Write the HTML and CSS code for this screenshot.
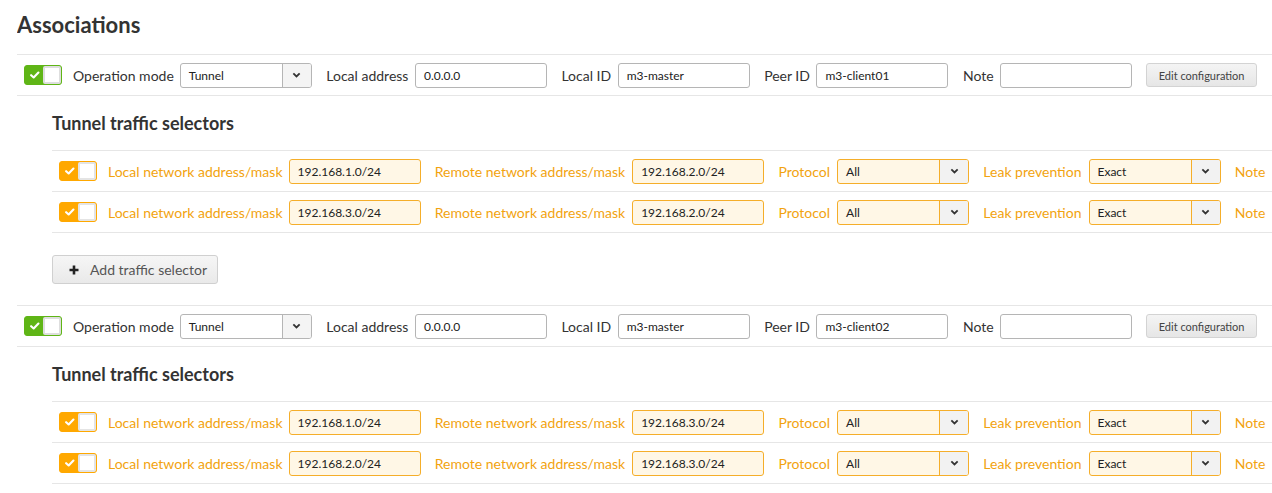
FILE: index.html
```html
<!DOCTYPE html>
<html>
<head>
<meta charset="utf-8">
<link rel="stylesheet" href="styles.css">
</head>
<body>
<h1 class="title">Associations</h1>

<section class="assoc">
  <div class="assoc-row">
    <span class="toggle toggle-green"><svg class="check" viewBox="0 0 10 8"><polyline points="1.2,4.2 3.8,6.6 8.8,1.4"/></svg><span class="knob"></span></span>
    <label class="lbl first">Operation mode</label>
    <span class="select"><span class="sel-text">Tunnel</span><span class="sel-arrow"><svg viewBox="0 0 10 6"><polyline points="1.5,1.2 5,4.6 8.5,1.2"/></svg></span></span>
    <label class="lbl">Local address</label><span class="input">0.0.0.0</span>
    <label class="lbl">Local ID</label><span class="input">m3-master</span>
    <label class="lbl">Peer ID</label><span class="input">m3-client01</span>
    <label class="lbl">Note</label><span class="input"></span>
    <button class="btn-edit">Edit configuration</button>
  </div>
  <div class="selectors">
    <h2 class="sub">Tunnel traffic selectors</h2>
    <div class="sel-list">
      <div class="sel-row">
        <span class="toggle toggle-orange"><svg class="check" viewBox="0 0 10 8"><polyline points="1.2,4.2 3.8,6.6 8.8,1.4"/></svg><span class="knob"></span></span>
        <label class="olbl first">Local network address/mask</label><span class="input oin">192.168.1.0/24</span>
        <label class="olbl">Remote network address/mask</label><span class="input oin">192.168.2.0/24</span>
        <label class="olbl">Protocol</label><span class="select osel"><span class="sel-text">All</span><span class="sel-arrow"><svg viewBox="0 0 10 6"><polyline points="1.5,1.2 5,4.6 8.5,1.2"/></svg></span></span>
        <label class="olbl">Leak prevention</label><span class="select osel"><span class="sel-text">Exact</span><span class="sel-arrow"><svg viewBox="0 0 10 6"><polyline points="1.5,1.2 5,4.6 8.5,1.2"/></svg></span></span>
        <label class="olbl">Note</label><span class="input oin"></span>
      </div>
      <div class="sel-row">
        <span class="toggle toggle-orange"><svg class="check" viewBox="0 0 10 8"><polyline points="1.2,4.2 3.8,6.6 8.8,1.4"/></svg><span class="knob"></span></span>
        <label class="olbl first">Local network address/mask</label><span class="input oin">192.168.3.0/24</span>
        <label class="olbl">Remote network address/mask</label><span class="input oin">192.168.2.0/24</span>
        <label class="olbl">Protocol</label><span class="select osel"><span class="sel-text">All</span><span class="sel-arrow"><svg viewBox="0 0 10 6"><polyline points="1.5,1.2 5,4.6 8.5,1.2"/></svg></span></span>
        <label class="olbl">Leak prevention</label><span class="select osel"><span class="sel-text">Exact</span><span class="sel-arrow"><svg viewBox="0 0 10 6"><polyline points="1.5,1.2 5,4.6 8.5,1.2"/></svg></span></span>
        <label class="olbl">Note</label><span class="input oin"></span>
      </div>
    </div>
    <button class="btn-add"><svg class="plus" viewBox="0 0 10 10"><path d="M5 0.5V9.5M0.5 5H9.5"/></svg>Add traffic selector</button>
  </div>
</section>

<section class="assoc">
  <div class="assoc-row">
    <span class="toggle toggle-green"><svg class="check" viewBox="0 0 10 8"><polyline points="1.2,4.2 3.8,6.6 8.8,1.4"/></svg><span class="knob"></span></span>
    <label class="lbl first">Operation mode</label>
    <span class="select"><span class="sel-text">Tunnel</span><span class="sel-arrow"><svg viewBox="0 0 10 6"><polyline points="1.5,1.2 5,4.6 8.5,1.2"/></svg></span></span>
    <label class="lbl">Local address</label><span class="input">0.0.0.0</span>
    <label class="lbl">Local ID</label><span class="input">m3-master</span>
    <label class="lbl">Peer ID</label><span class="input">m3-client02</span>
    <label class="lbl">Note</label><span class="input"></span>
    <button class="btn-edit">Edit configuration</button>
  </div>
  <div class="selectors">
    <h2 class="sub">Tunnel traffic selectors</h2>
    <div class="sel-list">
      <div class="sel-row">
        <span class="toggle toggle-orange"><svg class="check" viewBox="0 0 10 8"><polyline points="1.2,4.2 3.8,6.6 8.8,1.4"/></svg><span class="knob"></span></span>
        <label class="olbl first">Local network address/mask</label><span class="input oin">192.168.1.0/24</span>
        <label class="olbl">Remote network address/mask</label><span class="input oin">192.168.3.0/24</span>
        <label class="olbl">Protocol</label><span class="select osel"><span class="sel-text">All</span><span class="sel-arrow"><svg viewBox="0 0 10 6"><polyline points="1.5,1.2 5,4.6 8.5,1.2"/></svg></span></span>
        <label class="olbl">Leak prevention</label><span class="select osel"><span class="sel-text">Exact</span><span class="sel-arrow"><svg viewBox="0 0 10 6"><polyline points="1.5,1.2 5,4.6 8.5,1.2"/></svg></span></span>
        <label class="olbl">Note</label><span class="input oin"></span>
      </div>
      <div class="sel-row">
        <span class="toggle toggle-orange"><svg class="check" viewBox="0 0 10 8"><polyline points="1.2,4.2 3.8,6.6 8.8,1.4"/></svg><span class="knob"></span></span>
        <label class="olbl first">Local network address/mask</label><span class="input oin">192.168.2.0/24</span>
        <label class="olbl">Remote network address/mask</label><span class="input oin">192.168.3.0/24</span>
        <label class="olbl">Protocol</label><span class="select osel"><span class="sel-text">All</span><span class="sel-arrow"><svg viewBox="0 0 10 6"><polyline points="1.5,1.2 5,4.6 8.5,1.2"/></svg></span></span>
        <label class="olbl">Leak prevention</label><span class="select osel"><span class="sel-text">Exact</span><span class="sel-arrow"><svg viewBox="0 0 10 6"><polyline points="1.5,1.2 5,4.6 8.5,1.2"/></svg></span></span>
        <label class="olbl">Note</label><span class="input oin"></span>
      </div>
    </div>
  </div>
</section>
</body>
</html>
```

FILE: styles.css
```css
html { overflow: hidden; }
body {
  margin: 0 0 0 17px;
  font-family: Lato, "Open Sans", sans-serif;
  color: #333;
  background: #fff;
}
.title {
  margin: 10px 0 14px;
  font-size: 22px;
  line-height: 30px;
  font-weight: 700;
  color: #333;
}
.assoc-row {
  display: flex;
  align-items: center;
  height: 40px;
  padding-left: 7px;
  border-top: 1px solid #e6e6e6;
  border-bottom: 1px solid #e6e6e6;
  white-space: nowrap;
}
.selectors { margin-left: 35px; }
.sub {
  margin: 0;
  padding: 16px 0 16px;
  font-size: 18px;
  line-height: 22px;
  font-weight: 700;
  color: #333;
}
.sel-list { border-top: 1px solid #e6e6e6; }
.sel-row {
  display: flex;
  align-items: center;
  height: 40px;
  padding-left: 7px;
  border-bottom: 1px solid #e6e6e6;
  white-space: nowrap;
}
.toggle {
  display: flex;
  align-items: center;
  flex: none;
  width: 38px;
  height: 20px;
  box-sizing: border-box;
  border-radius: 3px;
  border: 1px solid;
}
.toggle-green { background: #5fb516; border-color: #5fb516; }
.toggle-orange { background: #ffa800; border-color: #ffa800; }
.check {
  width: 10px;
  height: 8px;
  margin-left: 5px;
  margin-right: 3px;
  fill: none;
  stroke: #fff;
  stroke-width: 2.2;
  stroke-linecap: round;
  stroke-linejoin: round;
}
.knob {
  width: 19px;
  height: 18px;
  box-sizing: border-box;
  margin-left: auto;
  background: #fff;
  border: 2px solid #e4e4e4;
  border-radius: 2px;
}
.toggle-green .knob { border-color: #dedede; }
.lbl, .olbl {
  font-size: 14px;
  margin-left: 14.5px;
  margin-right: 6.5px;
  flex: none;
}
.lbl.first { margin-left: 11px; margin-right: 6px; }
.olbl { color: #f2a30f; margin-left: 14.3px; margin-right: 7px; }
.olbl.first { margin-left: 11px; margin-right: 6px; }
.input, .select {
  flex: none;
  display: flex;
  align-items: center;
  width: 132px;
  height: 25px;
  box-sizing: border-box;
  border: 1px solid #b5b5b5;
  border-radius: 3px;
  background: #fff;
  font-size: 12px;
  color: #222;
  padding-left: 8px;
}
.select { padding-left: 0; }
.sel-text { flex: 1; padding-left: 8px; }
.sel-arrow {
  width: 28px;
  height: 100%;
  display: flex;
  align-items: center;
  justify-content: center;
  border-left: 1px solid #b5b5b5;
  background: #f4f4f4;
  border-radius: 0 2px 2px 0;
}
.sel-arrow svg {
  width: 9px;
  height: 6px;
  fill: none;
  stroke: #333;
  stroke-width: 2;
}
.oin, .osel {
  border-color: #f5ae2a;
  background: #fff7e6;
}
.osel .sel-arrow {
  border-left-color: #f5ae2a;
  background: #f2f2f2;
}
.btn-edit {
  flex: none;
  margin-left: 14px;
  width: 111px;
  height: 24px;
  padding: 0;
  font-family: Lato, sans-serif;
  font-size: 11px;
  color: #444;
  border: 1px solid #d3d3d3;
  border-radius: 3px;
  background: linear-gradient(#f4f4f4, #e6e6e6);
}
.btn-add {
  display: flex;
  align-items: center;
  margin: 22px 0 21px;
  width: 166px;
  height: 29px;
  padding: 0 0 0 16px;
  font-family: Lato, sans-serif;
  font-size: 14px;
  color: #555;
  border: 1px solid #d0d0d0;
  border-radius: 3px;
  background: linear-gradient(#f6f6f6, #e9e9e9);
}
.plus {
  width: 10px;
  height: 10px;
  margin-right: 11px;
  fill: none;
  stroke: #222;
  stroke-width: 2.6;
}
```
